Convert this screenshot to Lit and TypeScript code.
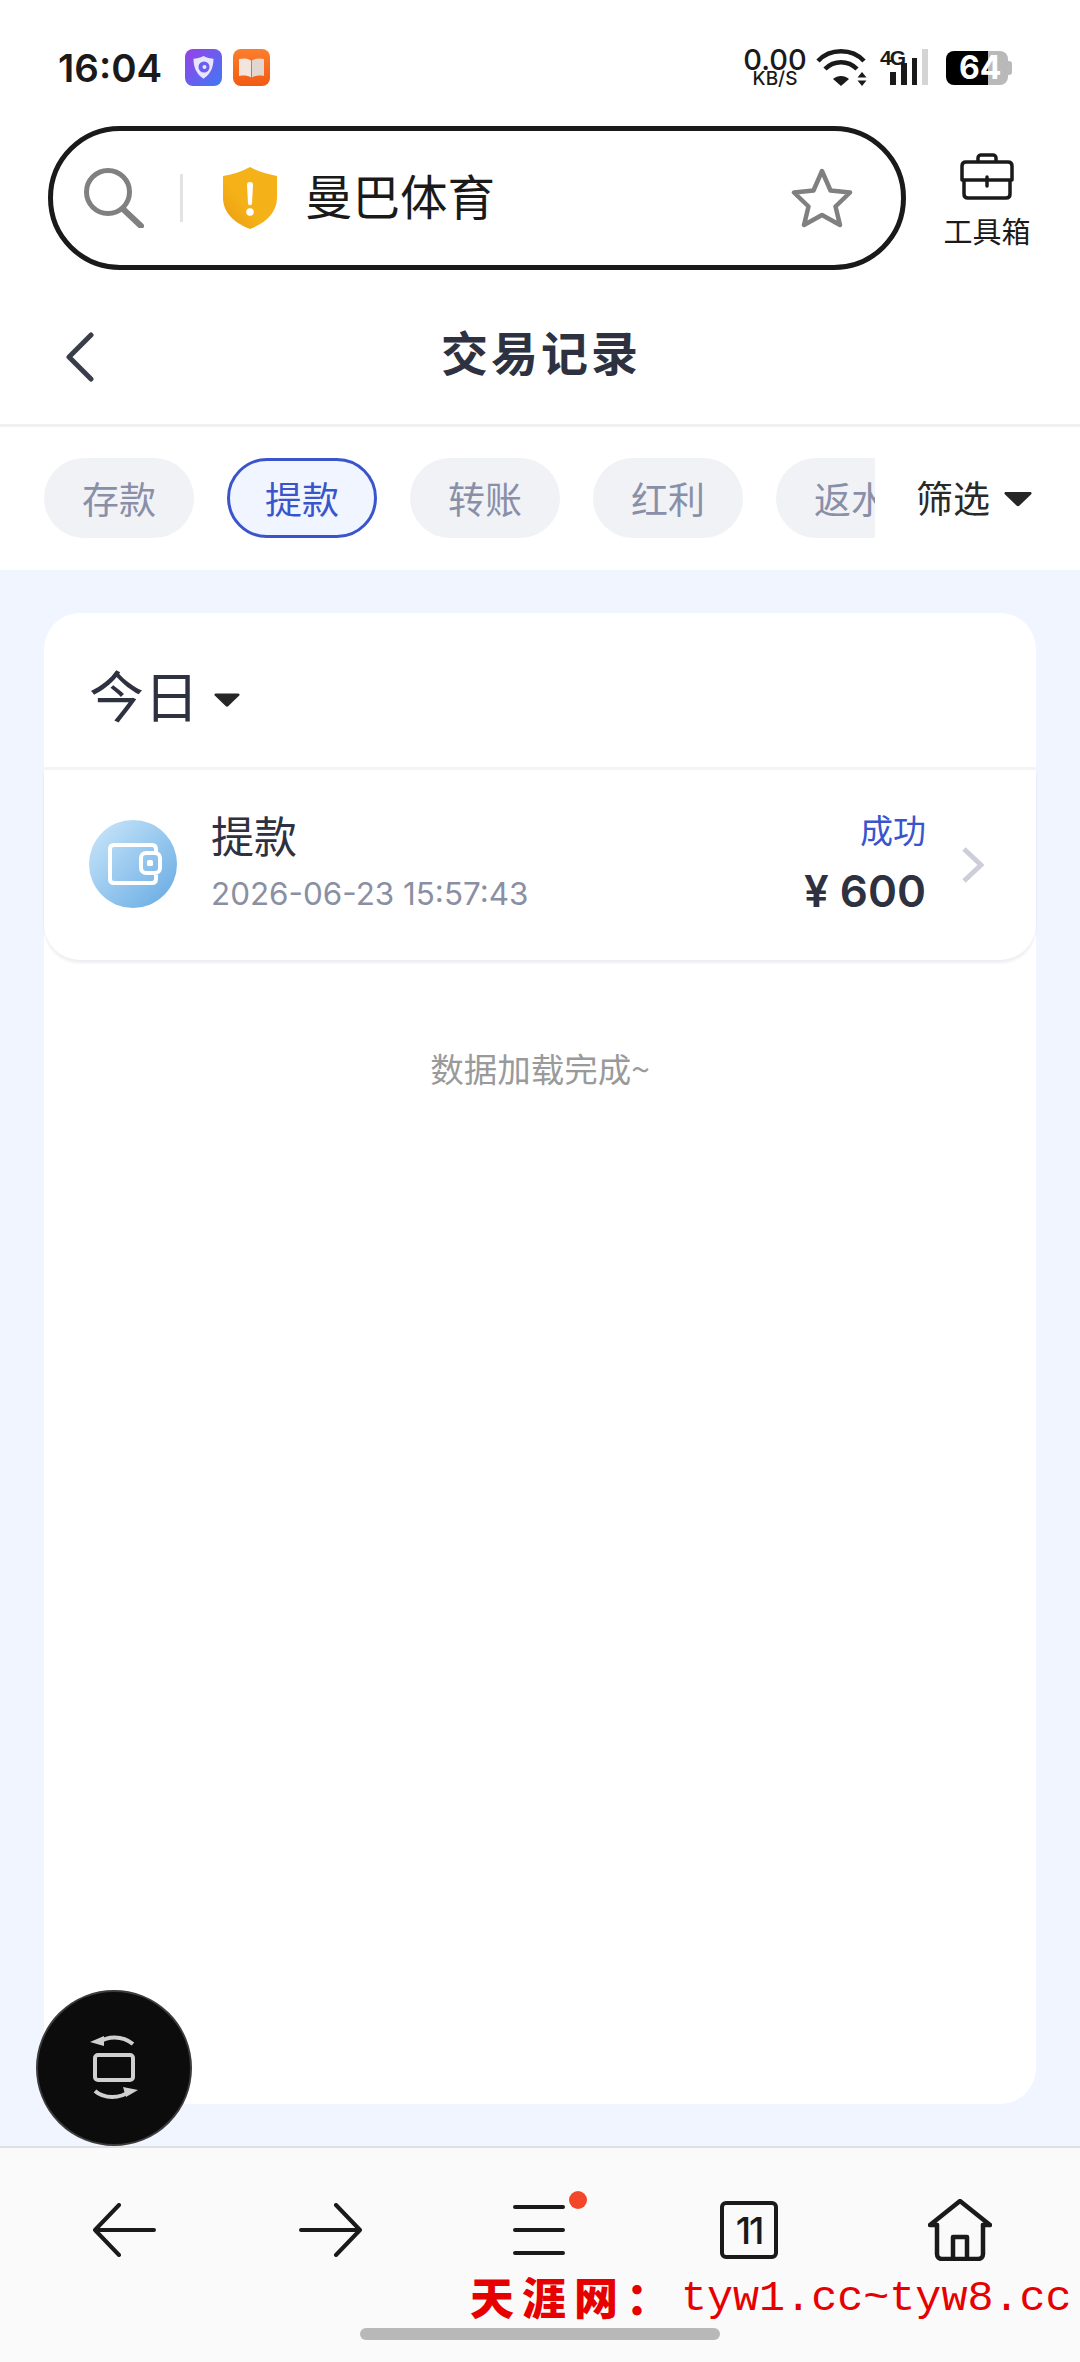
import { LitElement, css, html, svg } from 'lit'
import { customElement, state } from 'lit/decorators.js'
import { classMap } from 'lit/directives/class-map.js'

const TABS = ['存款', '提款', '转账', '红利', '返水']

const caret = svg`<path d="M2 2h24c1.5 0 2 1.2 1.2 2.2L15.5 15.5c-.9.9-2.1.9-3 0L.8 4.2C0 3.2.5 2 2 2z" fill="currentColor" />`

@customElement('app-root')
export class AppRoot extends LitElement {
  @state()
  activeTab = 1

  private renderStatusBar() {
    return html`
      <div class="status">
        <span class="time">16:04</span>
        <svg class="app-icon first" viewBox="0 0 37 37">
          <defs>
            <linearGradient id="shieldApp" x1="0" y1="0" x2="1" y2="1">
              <stop offset="0" stop-color="#9a3fe6" />
              <stop offset="1" stop-color="#3d7bf5" />
            </linearGradient>
          </defs>
          <rect width="37" height="37" rx="8" fill="url(#shieldApp)" />
          <path d="M18.5 7c3.5 2 7 2.6 10 2.8 0 8-2.500 15-10 20-7.500-5-10-12-10-20 3-.2 6.500-.8 10-2.800z" fill="#e8e6fb" />
          <circle cx="19" cy="18" r="5.500" fill="#6c5ef0" />
          <circle cx="19.500" cy="18" r="2" fill="#e8e6fb" />
        </svg>
        <svg class="app-icon" viewBox="0 0 37 37">
          <defs>
            <linearGradient id="bookApp" x1="0" y1="0" x2="0" y2="1">
              <stop offset="0" stop-color="#fb7f2c" />
              <stop offset="1" stop-color="#f25a12" />
            </linearGradient>
          </defs>
          <rect width="37" height="37" rx="8" fill="url(#bookApp)" />
          <path d="M6 10c5-1 9-.6 12 1.500v17c-3-2-7-2.500-12-1.500z" fill="#f3e5dc" />
          <path d="M31 10c-5-1-9-.6-12 1.500v17c3-2 7-2.500 12-1.500z" fill="#e3d6cf" />
        </svg>
        <div class="speed">
          <span class="speed-value">0.00</span>
          <span class="speed-unit">KB/S</span>
        </div>
        <svg class="wifi" viewBox="0 0 52 37" fill="none" stroke="#1a1a1a" stroke-width="4.500">
          <path d="M2 12C14 -1 36 -1 48 12" />
          <path d="M9 20c9-9 23-9 32 0" />
          <path d="M25 37l-8-7c4.500-4 11.500-4 16 0z" fill="#1a1a1a" stroke="none" />
          <path d="M46 23l4.500 5.500h-9zM46 37l4.500-5.500h-9z" fill="#1a1a1a" stroke="none" />
        </svg>
        <div class="signal">
          <span class="net">4G</span>
          <i style="height:13px"></i>
          <i style="height:22px"></i>
          <i style="height:27px"></i>
          <i class="off" style="height:36px"></i>
        </div>
        <div class="battery">
          <span class="battery-level">64</span>
        </div>
      </div>
    `
  }

  private renderSearchBar() {
    return html`
      <div class="address-row">
        <div class="address">
          <svg class="search" viewBox="0 0 60 60" fill="none" stroke="#808080" stroke-width="5" stroke-linecap="round">
            <circle cx="24" cy="24" r="21.500" />
            <path d="M39 41l18 17" stroke-width="6" />
          </svg>
          <i class="address-divider"></i>
          <svg class="shield" viewBox="0 0 54 62">
            <defs>
              <linearGradient id="shieldFill" x1="0" y1="1" x2="1" y2="0">
                <stop offset="0" stop-color="#e99a10" />
                <stop offset="0.4" stop-color="#f5b118" />
              </linearGradient>
            </defs>
            <path d="M27 0c8 4.500 16 7 27 9v22c0 14-11 25-27 31C11 56 0 45 0 31V9c11-2 19-4.500 27-9z" fill="url(#shieldFill)" />
            <path d="M27 15c2 0 3.200 1.200 3 3.200l-1 18c-.1 1.200-.9 2-2 2s-1.900-.8-2-2l-1-18c-.2-2 1-3.200 3-3.200z" fill="#fff" />
            <circle cx="27" cy="45" r="3.800" fill="#fff" />
          </svg>
          <span class="site">曼巴体育</span>
          <svg class="star" viewBox="0 0 62 60" fill="none" stroke="#808080" stroke-width="4.500" stroke-linejoin="round">
            <path d="M31 3l8.500 19.500L59 24.500 44.500 38.500 49 57 31 47 13 57l4.500-18.500L3 24.500l19.500-2z" />
          </svg>
        </div>
        <div class="toolbox">
          <svg viewBox="0 0 54 47" fill="none" stroke="#1a1a1a" stroke-width="3.500" stroke-linejoin="round">
            <path d="M18 9V5c0-2 1.500-3 3-3h12c1.500 0 3 1 3 3v4" />
            <path d="M6 9h42c2.500 0 4 1.500 4 4v14H2V13c0-2.500 1.500-4 4-4z" />
            <path d="M4 27v14c0 2.500 1.500 4 4 4h38c2.500 0 4-1.500 4-4V27" />
            <path d="M27 24v9" stroke-linecap="round" />
          </svg>
          <span>工具箱</span>
        </div>
      </div>
    `
  }

  private renderFilters() {
    return html`
      <div class="filters">
        <div class="tabs">
          ${TABS.map(
            (label, i) => html`
              <span class=${classMap({ tab: true, active: i === this.activeTab })}>${label}</span>
            `,
          )}
        </div>
        <div class="filter-toggle">
          <span>筛选</span>
          <svg class="caret" viewBox="0 0 28 18">${caret}</svg>
        </div>
      </div>
    `
  }

  private renderRecord() {
    return html`
      <div class="record">
        <svg class="record-icon" viewBox="0 0 88 88">
          <defs>
            <linearGradient id="walletBg" x1="0" y1="0" x2="1" y2="1">
              <stop offset="0" stop-color="#cde8fb" />
              <stop offset="1" stop-color="#64a9e2" />
            </linearGradient>
          </defs>
          <circle cx="44" cy="44" r="44" fill="url(#walletBg)" />
          <path d="M67 33v-4c0-2.500-1.500-4-4-4H25c-2.500 0-4 1.500-4 4v30c0 2.500 1.500 4 4 4h38c2.500 0 4-1.500 4-4v-4" fill="none" stroke="#fff" stroke-width="4" />
          <rect x="52" y="33" width="19" height="20" rx="5" fill="none" stroke="#fff" stroke-width="4" />
          <rect x="58" y="40" width="6" height="6" rx="1.500" fill="#fff" />
        </svg>
        <div class="record-main">
          <span class="record-title">提款</span>
          <span class="record-date">2026-06-23 15:57:43</span>
        </div>
        <div class="record-side">
          <span class="record-state">成功</span>
          <span class="record-amount">¥ 600</span>
        </div>
        <svg class="record-more" viewBox="0 0 22 36" fill="none" stroke="#ccced9" stroke-width="5">
          <path d="M2 2l17 16L2 34" />
        </svg>
      </div>
    `
  }

  private renderBottomBar() {
    return html`
      <nav class="bottom">
        <div class="bottom-icons">
          <svg class="arrow" viewBox="0 0 64 54" fill="none" stroke="#1a1a1a" stroke-width="4" stroke-linecap="round" stroke-linejoin="round">
            <path d="M62 27H3M27 2L3 27l24 25" />
          </svg>
          <svg class="arrow forward" viewBox="0 0 64 54" fill="none" stroke="#1a1a1a" stroke-width="4" stroke-linecap="round" stroke-linejoin="round">
            <path d="M2 27h59M37 2l24 25-24 25" />
          </svg>
          <div class="menu">
            <svg viewBox="0 0 52 52" fill="none" stroke="#1a1a1a" stroke-width="4" stroke-linecap="round">
              <path d="M2 3h48M2 26h48M2 49h48" />
            </svg>
            <i class="menu-dot"></i>
          </div>
          <div class="pages">11</div>
          <svg class="home" viewBox="0 0 64 62" fill="none" stroke="#1a1a1a" stroke-width="4.500" stroke-linejoin="round" stroke-linecap="round">
            <path d="M9 26H2L32 2l30 24h-7" />
            <path d="M9 26v29c0 3 2 5 5 5h36c3 0 5-2 5-5V26" />
            <path d="M25 60V38h14v22" />
          </svg>
        </div>
        <div class="home-indicator"></div>
      </nav>
    `
  }

  render() {
    return html`
      <div class="page">
        <header class="browser">
          ${this.renderStatusBar()}
          ${this.renderSearchBar()}
        </header>

        <div class="title-bar">
          <svg class="back" viewBox="0 0 28 50" fill="none" stroke="#3a3d4a" stroke-width="5" stroke-linecap="round" stroke-linejoin="round">
            <path d="M25 3L3 25l22 22" />
          </svg>
          <h1>交易记录</h1>
        </div>

        ${this.renderFilters()}

        <main>
          <section class="card">
            <div class="period">
              <span>今日</span>
              <svg class="caret" viewBox="0 0 28 18">${caret}</svg>
            </div>
            ${this.renderRecord()}
            <p class="loaded">数据加载完成~</p>
          </section>
        </main>

        ${this.renderBottomBar()}

        <button class="float-btn" aria-label="rotate">
          <svg viewBox="0 0 48 68" fill="none" stroke="#d0d0d0" stroke-width="4">
            <path d="M8 9c9-7 24-8 35 1" />
            <path d="M0 8l14-6v10z" fill="#d0d0d0" stroke="none" />
            <rect x="5" y="21" width="38" height="25" rx="3" />
            <path d="M5 57c9 8 25 8 35 0" />
            <path d="M48 56l-15-3 3 10z" fill="#d0d0d0" stroke="none" />
          </svg>
        </button>

        <div class="site-mark">
          <span class="site-mark-name">天涯网：</span>
          <span class="site-mark-url">tyw1.cc~tyw8.cc</span>
        </div>
      </div>
    `
  }

  static styles = css`
    *,
    *::before,
    *::after {
      box-sizing: border-box;
    }

    :host {
      display: block;
      font-family: 'Noto Sans CJK SC', 'Noto Sans', sans-serif;
      color: #2e3140;
    }

    .page {
      position: relative;
      display: flex;
      flex-direction: column;
      width: 1080px;
      height: 2362px;
      background: #fff;
      overflow: hidden;
    }

    .browser {
      height: 290px;
      padding: 49px 0 0 48px;
    }

    .status {
      display: flex;
      align-items: flex-start;
      height: 77px;
      padding-left: 10px;
    }

    .time {
      width: 127px;
      font-family: Inter, sans-serif;
      font-size: 38.500px;
      line-height: 38px;
      font-weight: 600;
      color: #1a1a1a;
      white-space: nowrap;
    }

    .app-icon {
      width: 37px;
      height: 37px;
      margin-right: 11px;
    }

    .speed {
      display: flex;
      flex-direction: column;
      align-items: center;
      width: 60px;
      margin-left: 464px;
      font-family: Inter, sans-serif;
      color: #1a1a1a;
    }

    .speed-value {
      font-size: 29px;
      line-height: 22px;
      font-weight: 500;
    }

    .speed-unit {
      font-size: 19px;
      line-height: 15px;
      font-weight: 500;
    }

    .wifi {
      width: 52px;
      height: 37px;
      margin-left: 11px;
    }

    .signal {
      position: relative;
      display: flex;
      align-items: flex-end;
      gap: 5px;
      width: 48px;
      height: 36px;
      margin-left: 12px;
      padding-left: 10px;
    }

    .signal i {
      width: 6px;
      background: #1a1a1a;
    }

    .signal i.off {
      background: #d4d4d4;
    }

    .net {
      position: absolute;
      top: -2px;
      left: 0;
      font-family: 'Liberation Sans', sans-serif;
      font-size: 21px;
      line-height: 21px;
      font-weight: 700;
      letter-spacing: -2px;
      color: #1a1a1a;
    }

    .battery {
      position: relative;
      display: flex;
      align-items: center;
      width: 62px;
      height: 34px;
      margin: 2px 0 0 18px;
      padding-left: 13px;
      border-radius: 8px;
      background: linear-gradient(90deg, #000 0 42px, #b9b9b9 42px);
    }

    .battery::after {
      content: '';
      position: absolute;
      top: 10px;
      right: -4px;
      width: 4px;
      height: 14px;
      border-radius: 0 3px 3px 0;
      background: #b9b9b9;
    }

    .battery-level {
      font-family: Inter, sans-serif;
      font-size: 32px;
      line-height: 34px;
      font-weight: 700;
      color: #fff;
    }

    .address-row {
      display: flex;
      align-items: flex-start;
    }

    .address {
      display: flex;
      align-items: center;
      width: 858px;
      height: 144px;
      padding-left: 31px;
      border: 5px solid #1a1a1a;
      border-radius: 72px;
    }

    .search {
      flex: none;
      width: 60px;
      height: 60px;
    }

    .address-divider {
      width: 3px;
      height: 48px;
      margin-left: 36px;
      background: #e2e2e2;
    }

    .shield {
      width: 54px;
      height: 62px;
      margin-left: 40px;
    }

    .site {
      flex: 1;
      margin-left: 28px;
      padding-bottom: 6px;
      font-size: 47.500px;
      line-height: 60px;
      color: #1a1a1a;
    }

    .star {
      width: 62px;
      height: 60px;
      margin-right: 48px;
    }

    .toolbox {
      display: flex;
      flex-direction: column;
      align-items: center;
      gap: 14px;
      width: 86px;
      margin: 27px 0 0 38px;
      font-size: 29px;
      line-height: 32px;
      color: #1a1a1a;
      white-space: nowrap;
    }

    .toolbox svg {
      width: 54px;
      height: 47px;
    }

    .title-bar {
      position: relative;
      display: flex;
      align-items: center;
      justify-content: center;
      height: 137px;
      padding-bottom: 13px;
      border-bottom: 3px solid #f1f1f3;
    }

    .back {
      position: absolute;
      top: 42px;
      left: 66px;
      width: 28px;
      height: 50px;
    }

    h1 {
      margin: 0 0 0 2px;
      font-size: 47px;
      line-height: 60px;
      font-weight: 700;
      letter-spacing: 3px;
      color: #2e3140;
    }

    .filters {
      display: flex;
      align-items: center;
      height: 143px;
      padding-bottom: 2px;
    }

    .tabs {
      display: flex;
      flex: none;
      gap: 33px;
      width: 875px;
      padding-left: 44px;
      overflow: hidden;
    }

    .tab {
      flex: none;
      display: flex;
      align-items: center;
      justify-content: center;
      width: 150px;
      height: 80px;
      border-radius: 40px;
      background: #f1f2f6;
      font-size: 37px;
      color: #8a8fa8;
    }

    .tab.active {
      border: 3px solid #3a55cc;
      background: #f0f5ff;
      color: #3a55cc;
    }

    .filter-toggle {
      display: flex;
      align-items: center;
      gap: 14px;
      margin-left: 41px;
      padding-bottom: 2px;
      font-size: 37px;
      color: #2a2a2a;
    }

    .caret {
      width: 28px;
      height: 18px;
      margin-top: 4px;
      color: #262626;
    }

    main {
      flex: 1;
      display: flex;
      padding: 43px 44px 42px;
      background: #f0f5ff;
    }

    .card {
      flex: 1;
      border-radius: 36px;
      background: #fff;
    }

    .period {
      display: flex;
      align-items: center;
      gap: 15px;
      height: 157px;
      padding: 6px 0 0 45px;
      border-bottom: 3px solid #f3f4f6;
      font-size: 55px;
      line-height: 70px;
      color: #2e3140;
    }

    .period .caret {
      width: 26px;
      margin-top: 14px;
    }

    .record {
      display: flex;
      align-items: center;
      height: 190px;
      padding: 0 52px 0 45px;
      border-radius: 0 0 36px 36px;
      box-shadow: 0 3px 3px rgb(30 40 80 / 8%);
    }

    .record-icon {
      flex: none;
      width: 88px;
      height: 88px;
      margin-top: -2px;
    }

    .record-main {
      display: flex;
      flex: 1;
      flex-direction: column;
      gap: 12px;
      margin: -10px 0 0 34px;
    }

    .record-title {
      font-size: 43px;
      line-height: 56px;
      color: #2e3140;
    }

    .record-date {
      font-family: Inter, sans-serif;
      font-size: 31.400px;
      line-height: 40px;
      color: #8a8fa3;
      white-space: nowrap;
    }

    .record-side {
      display: flex;
      flex-direction: column;
      align-items: flex-end;
      gap: 12px;
      margin: -4px 4px 0 0;
    }

    .record-state {
      font-size: 33px;
      line-height: 44px;
      color: #3a55cc;
    }

    .record-amount {
      font-family: Inter, sans-serif;
      font-size: 44px;
      line-height: 56px;
      font-weight: 600;
      color: #2e3140;
      white-space: nowrap;
    }

    .record-more {
      flex: none;
      width: 22px;
      height: 36px;
      margin-left: 32px;
    }

    .loaded {
      margin: 88px 0 0;
      text-align: center;
      font-size: 33.500px;
      line-height: 40px;
      color: #9a9a9a;
    }

    .bottom {
      display: flex;
      flex-direction: column;
      align-items: center;
      height: 216px;
      border-top: 2px solid #dfe0e3;
      background: #fafafb;
    }

    .bottom-icons {
      display: flex;
      align-self: stretch;
      align-items: center;
      height: 62px;
      margin-top: 51px;
      padding-left: 92px;
    }

    .arrow {
      width: 64px;
      height: 54px;
    }

    .forward {
      margin-left: 143px;
    }

    .menu {
      position: relative;
      width: 52px;
      height: 52px;
      margin-left: 150px;
    }

    .menu svg {
      display: block;
      width: 52px;
      height: 52px;
    }

    .menu-dot {
      position: absolute;
      top: -13px;
      right: -22px;
      width: 18px;
      height: 18px;
      border-radius: 50%;
      background: #f4472a;
    }

    .pages {
      display: flex;
      align-items: center;
      justify-content: center;
      width: 58px;
      height: 58px;
      margin-left: 155px;
      border: 4.500px solid #1a1a1a;
      border-radius: 6px;
      font-family: Inter, sans-serif;
      font-size: 37px;
      font-weight: 500;
      letter-spacing: -2px;
      color: #1a1a1a;
    }

    .home {
      width: 64px;
      height: 62px;
      margin-left: 150px;
    }

    .home-indicator {
      width: 360px;
      height: 12px;
      margin-top: 67px;
      border-radius: 6px;
      background: #b8b8b8;
    }

    .float-btn {
      position: absolute;
      top: 1990px;
      left: 36px;
      display: flex;
      align-items: center;
      justify-content: center;
      width: 156px;
      height: 156px;
      padding: 0;
      border: 2px solid #3c3c3c;
      border-radius: 50%;
      background: #0c0c0c;
    }

    .float-btn svg {
      width: 48px;
      height: 68px;
    }

    .site-mark {
      position: absolute;
      top: 2265px;
      left: 470px;
      display: flex;
      align-items: center;
      color: #e60000;
      white-space: nowrap;
    }

    .site-mark-name {
      width: 211px;
      font-size: 44px;
      line-height: 56px;
      font-weight: 900;
      letter-spacing: 8px;
    }

    .site-mark-url {
      font-family: 'Liberation Mono', monospace;
      font-size: 43.400px;
      line-height: 56px;
      margin-top: 6px;
    }
  `
}

declare global {
  interface HTMLElementTagNameMap {
    'app-root': AppRoot
  }
}
